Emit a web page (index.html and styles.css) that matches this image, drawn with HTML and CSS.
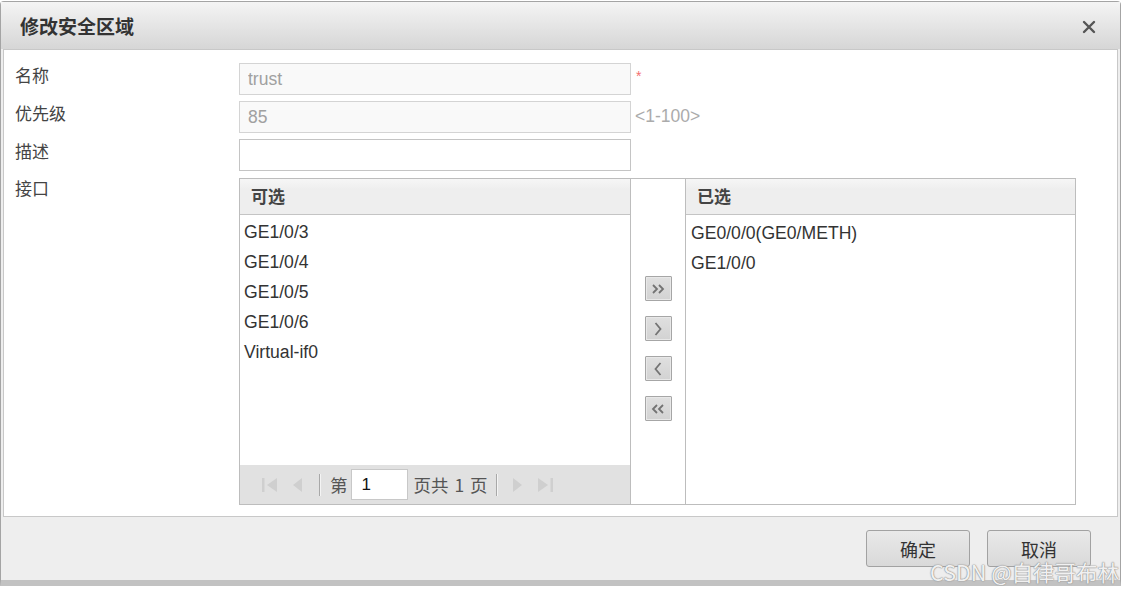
FILE: index.html
```html
<!DOCTYPE html>
<html lang="zh-CN">
<head>
    <meta charset="UTF-8">
    <meta name="viewport" content="width=device-width, initial-scale=1.0">
    <title>修改安全区域</title>
    <link rel="stylesheet" href="styles.css">
</head>
<body>
    <div class="dialog">
        <div class="dialog-header">
            <span class="dialog-title">修改安全区域</span>
            <span class="dialog-close">
                <svg width="14" height="14" viewBox="0 0 14 14"><path d="M2 2 L12 12 M12 2 L2 12" stroke="#555" stroke-width="2.4" stroke-linecap="round"/></svg>
            </span>
        </div>

        <div class="dialog-body">
            <div class="form-row">
                <div class="form-label">名称</div>
                <input class="text-input" type="text" value="trust" disabled>
                <span class="required">*</span>
            </div>
            <div class="form-row">
                <div class="form-label">优先级</div>
                <input class="text-input" type="text" value="85" disabled>
                <span class="hint">&lt;1-100&gt;</span>
            </div>
            <div class="form-row">
                <div class="form-label">描述</div>
                <input class="text-input editable" type="text" value="">
            </div>
            <div class="form-row transfer-row">
                <div class="form-label">接口</div>
                <div class="transfer">
                    <div class="list-box">
                        <div class="list-header">可选</div>
                        <ul class="list-items">
                            <li>GE1/0/3</li>
                            <li>GE1/0/4</li>
                            <li>GE1/0/5</li>
                            <li>GE1/0/6</li>
                            <li>Virtual-if0</li>
                        </ul>
                        <div class="pager">
                            <svg class="pager-icon" width="18" height="20" viewBox="0 0 18 20"><rect x="1" y="3" width="2.5" height="14" fill="#cfcfcf"/><path d="M16 3 L6 10 L16 17 Z" fill="#cfcfcf"/></svg>
                            <svg class="pager-icon" width="14" height="20" viewBox="0 0 14 20"><path d="M12 3 L3 10 L12 17 Z" fill="#cfcfcf"/></svg>
                            <span class="pager-sep"></span>
                            <span class="pager-text">第</span>
                            <input class="page-input" type="text" value="1">
                            <span class="pager-text">页共 1 页</span>
                            <span class="pager-sep"></span>
                            <svg class="pager-icon" width="14" height="20" viewBox="0 0 14 20"><path d="M2 3 L11 10 L2 17 Z" fill="#cfcfcf"/></svg>
                            <svg class="pager-icon" width="18" height="20" viewBox="0 0 18 20"><path d="M2 3 L12 10 L2 17 Z" fill="#cfcfcf"/><rect x="14.5" y="3" width="2.5" height="14" fill="#cfcfcf"/></svg>
                        </div>
                    </div>

                    <div class="move-buttons">
                        <button class="move-btn" title="全部添加">
                            <svg width="16" height="12" viewBox="0 0 16 12"><path d="M3 2 L7 6 L3 10 M9 2 L13 6 L9 10" fill="none" stroke="#737373" stroke-width="1.8"/></svg>
                        </button>
                        <button class="move-btn" title="添加">
                            <svg width="12" height="16" viewBox="0 0 12 16"><path d="M3.5 2 L8.5 8 L3.5 14" fill="none" stroke="#737373" stroke-width="1.8"/></svg>
                        </button>
                        <button class="move-btn" title="移除">
                            <svg width="12" height="16" viewBox="0 0 12 16"><path d="M8.5 2 L3.5 8 L8.5 14" fill="none" stroke="#737373" stroke-width="1.8"/></svg>
                        </button>
                        <button class="move-btn" title="全部移除">
                            <svg width="16" height="12" viewBox="0 0 16 12"><path d="M7 2 L3 6 L7 10 M13 2 L9 6 L13 10" fill="none" stroke="#737373" stroke-width="1.8"/></svg>
                        </button>
                    </div>

                    <div class="list-box selected">
                        <div class="list-header">已选</div>
                        <ul class="list-items">
                            <li>GE0/0/0(GE0/METH)</li>
                            <li>GE1/0/0</li>
                        </ul>
                    </div>
                </div>
            </div>
        </div>

        <div class="dialog-footer">
            <button class="footer-btn">确定</button>
            <button class="footer-btn">取消</button>
        </div>

        <div class="watermark">CSDN @自律哥布林</div>
    </div>
</body>
</html>
```

FILE: styles.css
```css
body {
    margin: 0;
    background-color: #FFFFFF;
    font-family: "Liberation Sans", "Noto Sans CJK SC", sans-serif;
    color: #333333;
}

.dialog {
    position: relative;
    width: 1121px;
    height: 585px;
    margin-top: 1px;
    box-sizing: border-box;
    border: 1px solid #A4A4A4;
    border-bottom: 6px solid #C2C2C2;
    border-radius: 4px 4px 0 0;
    background-color: #EEEEEE;
    display: flex;
    flex-direction: column;
}

.dialog-header {
    height: 47px;
    flex-shrink: 0;
    display: flex;
    align-items: center;
    justify-content: space-between;
    padding: 0 24px 0 19px;
    background: linear-gradient(#F4F4F4, #D6D6D6);
}

.dialog-title {
    font-family: "Noto Sans CJK SC", sans-serif;
    font-size: 19px;
    font-weight: bold;
    color: #333333;
}

.dialog-close {
    display: flex;
    margin-top: 2px;
}

.dialog-body {
    margin: 0 2px;
    height: 468px;
    box-sizing: border-box;
    padding: 13px 11px 11px 11px;
    border: 1px solid #C8C8C8;
    background-color: #FFFFFF;
    display: flex;
    flex-direction: column;
    gap: 6px;
}

.form-row {
    display: flex;
    align-items: flex-start;
}

.form-label {
    width: 224px;
    flex-shrink: 0;
    margin-top: 2px;
    line-height: 20px;
    font-family: "Noto Sans CJK SC", sans-serif;
    font-size: 17px;
    color: #444444;
}

.text-input {
    width: 392px;
    height: 32px;
    box-sizing: border-box;
    margin: 0;
    padding: 0 8px;
    border: 1px solid #D4D4D4;
    background-color: #F9F9F9;
    font-family: "Liberation Sans", sans-serif;
    font-size: 17.5px;
    color: #A0A0A0;
}

.text-input.editable {
    border-color: #C4C4C4;
    background-color: #FFFFFF;
    color: #333333;
}

.required {
    margin: 5px 0 0 5px;
    font-size: 14px;
    color: #F46F6F;
}

.hint {
    margin: 5px 0 0 4px;
    font-size: 17.5px;
    color: #ABABAB;
}

.transfer-row {
    margin-top: 1px;
}

.transfer-row .form-label {
    margin-top: 0;
}

.transfer {
    display: flex;
    height: 327px;
}

.list-box {
    width: 392px;
    box-sizing: border-box;
    border: 1px solid #BDBDBD;
    display: flex;
    flex-direction: column;
}

.list-box.selected {
    width: 391px;
}

.list-header {
    height: 36px;
    flex-shrink: 0;
    box-sizing: border-box;
    padding: 0 11px;
    line-height: 34px;
    border-bottom: 1px solid #C4C4C4;
    background: linear-gradient(#F6F6F6, #EEEEEE 30%);
    font-family: "Noto Sans CJK SC", sans-serif;
    font-size: 17px;
    font-weight: bold;
    color: #444444;
}

.list-items {
    flex: 1;
    list-style: none;
    margin: 0;
    padding: 2px 5px 0 4px;
}

.list-items li {
    line-height: 30px;
    font-size: 17.6px;
    color: #333333;
}

.selected .list-items {
    padding-left: 5px;
    padding-top: 3px;
}

.pager {
    height: 39px;
    flex-shrink: 0;
    display: flex;
    align-items: center;
    padding-left: 21px;
    background-color: #E1E1E1;
    font-family: "Noto Sans CJK SC", sans-serif;
    font-size: 17.5px;
    color: #555555;
}

.pager-icon {
    margin-right: 11px;
}

.pager-sep {
    width: 1px;
    height: 22px;
    margin: 0 9px 0 4px;
    background-color: #A8A8A8;
    border-right: 1px solid #F4F4F4;
}

.page-input {
    width: 57px;
    height: 31px;
    box-sizing: border-box;
    margin: 0 6px 0 3px;
    padding: 0 10px;
    border: 1px solid #C8C8C8;
    background-color: #FFFFFF;
    font-family: "Liberation Sans", sans-serif;
    font-size: 17px;
    color: #111111;
}

.page-input + .pager-text {
    word-spacing: 2px;
}

.pager-text + .pager-sep {
    margin-left: 8px;
    margin-right: 13px;
}

.move-buttons {
    width: 54px;
    box-sizing: border-box;
    border-top: 1px solid #BDBDBD;
    border-bottom: 1px solid #BDBDBD;
    display: flex;
    flex-direction: column;
    align-items: center;
    gap: 15px;
    padding-top: 97px;
}

.move-btn {
    width: 27px;
    height: 25px;
    padding: 0;
    border: 1px solid #A6A6A6;
    border-radius: 1px;
    background: linear-gradient(#E0E0E0, #D2D2D2);
    box-shadow: inset 0 0 0 1px #E8E8E8;
    display: flex;
    align-items: center;
    justify-content: center;
    cursor: pointer;
}

.dialog-footer {
    flex: 1;
    display: flex;
    justify-content: flex-end;
    align-items: flex-start;
    gap: 17px;
    padding: 13px 29px 0 0;
}

.footer-btn {
    width: 104px;
    height: 37px;
    border: 1px solid #A2A2A2;
    border-radius: 3px;
    background: linear-gradient(#E9E9E9, #D9D9D9);
    font-family: "Noto Sans CJK SC", sans-serif;
    font-size: 18px;
    color: #333333;
    cursor: pointer;
}

.watermark {
    position: absolute;
    right: 1px;
    bottom: -7px;
    font-family: "Noto Sans CJK SC", sans-serif;
    font-size: 21.5px;
    color: rgba(255, 255, 255, 0.9);
    text-shadow: 0 0 1px #8E8E8E, 0 0 1px #8E8E8E, 0 0 2px #B0B0B0;
    pointer-events: none;
}
```
